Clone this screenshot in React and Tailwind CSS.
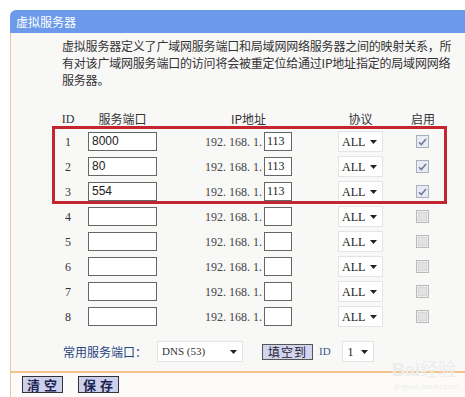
import React from "react";

// rows of the virtual server table
const rows = [
  { id: 1, port: "8000", ip: "113", on: true },
  { id: 2, port: "80", ip: "113", on: true },
  { id: 3, port: "554", ip: "113", on: true },
  { id: 4, port: "", ip: "", on: false },
  { id: 5, port: "", ip: "", on: false },
  { id: 6, port: "", ip: "", on: false },
  { id: 7, port: "", ip: "", on: false },
  { id: 8, port: "", ip: "", on: false },
];

const cjk = "font-['Noto_Sans_CJK_SC',sans-serif]";
const serif = "font-['Liberation_Serif','Noto_Sans_CJK_SC',serif]";

const Arrow = () => (
  <svg width="7" height="4" viewBox="0 0 7 4" className="shrink-0">
    <path d="M0 0h7L3.5 4z" fill="#222" />
  </svg>
);

const Check = ({ on }) => (
  <div
    className={`w-[13px] h-[13px] border flex items-center justify-center ${
      on ? "border-[#a9adbd] bg-[#e9ebf2]" : "border-[#b9b9b9] bg-[#eeeeee]"
    }`}
  >
    {on ? (
      <svg width="9" height="8" viewBox="0 0 9 8">
        <path d="M1 4.2l2.3 2.4L8 1" fill="none" stroke="#6f7c9e" strokeWidth="1.6" />
      </svg>
    ) : (
      <div className="w-[9px] h-[9px] bg-[#e2e2e2] border border-[#d6d6d6]" />
    )}
  </div>
);

const Row = ({ r }) => (
  <div className="flex items-center h-[25px]">
    <div className="w-[47px]" />
    <div className={`w-[20px] text-center text-[12px] text-[#333] ${serif}`}>{r.id}</div>
    <div className="ml-[10px] w-[69px] h-[19px] border border-[#666] bg-white pl-[3px] text-[12px] leading-[17px] text-[#222] font-['Liberation_Sans',sans-serif]">
      {r.port}
    </div>
    <div className={`ml-[48px] w-[57px] text-[12px] text-[#444] whitespace-nowrap ${serif}`}>192. 168. 1.</div>
    <div className={`ml-[2px] w-[28px] h-[19px] border border-[#666] bg-white pl-[2px] text-[12px] leading-[17px] text-[#222] ${serif}`}>
      {r.ip}
    </div>
    <div className="ml-[46px] w-[45px] h-[21px] border border-[#e4e4e4] bg-white flex items-center justify-between pl-[3px] pr-[5px]">
      <span className={`text-[12px] text-[#222] ${serif}`}>ALL</span>
      <Arrow />
    </div>
    <div className="ml-[33px]">
      <Check on={r.on} />
    </div>
  </div>
);

const App = () => {
  return (
    <div className="relative w-[465px] h-[397px] bg-white overflow-hidden pt-[10px] pl-[10px]">
      <div className={`h-[23px] bg-[#6b9aea] rounded-tl-[6px] pl-[6px] text-white text-[12px] leading-[23px] ${cjk}`}>
        虚拟服务器
      </div>
      <div className="border-l border-[#e8c9a2] h-[364px] bg-[#fdfbf9]">
        <div className="h-[340px] bg-[#f8f8f7] border-b-2 border-[#f2c48c] relative">
          {/* description */}
          <div className={`pl-[51px] pt-[4px] text-[12px] leading-[17px] text-[#333] whitespace-nowrap tracking-[-0.2px] ${cjk}`}>
            <div>虚拟服务器定义了广域网服务端口和局域网网络服务器之间的映射关系，所</div>
            <div>有对该广域网服务端口的访问将会被重定位给通过IP地址指定的局域网网络</div>
            <div>服务器。</div>
          </div>

          {/* table header */}
          <div className={`mt-[21px] flex items-center h-[20px] text-[12px] text-[#333] ${cjk}`}>
            <div className="w-[47px]" />
            <div className={`w-[20px] text-center ${serif}`}>ID</div>
            <div className="ml-[10px] w-[69px] text-center">服务端口</div>
            <div className="ml-[48px] w-[87px] text-center">IP地址</div>
            <div className="ml-[46px] w-[45px] text-center">协议</div>
            <div className="ml-[22px] w-[36px] text-center">启用</div>
          </div>

          {rows.map(r => (
            <Row key={r.id} r={r} />
          ))}

          {/* common ports */}
          <div className="flex items-center mt-[12px] h-[21px]">
            <div className={`ml-[52px] w-[94px] text-[12px] text-[#27457e] ${cjk}`}>常用服务端口：</div>
            <div className="w-[86px] h-[21px] bg-white border border-[#e4e4e4] flex items-center justify-between pl-[4px] pr-[5px]">
              <span className={`text-[11px] text-[#333] ${serif}`}>DNS (53)</span>
              <Arrow />
            </div>
            <div className={`ml-[19px] w-[51px] h-[16px] bg-[#d3d5ef] border border-[#555] text-[12px] leading-[13px] text-[#223] text-center overflow-hidden tracking-[1px] ${cjk}`}>
              填空到
            </div>
            <div className={`ml-[6px] text-[11px] text-[#3a5a8a] ${serif}`}>ID</div>
            <div className="ml-[11px] w-[32px] h-[21px] bg-white border border-[#e4e4e4] flex items-center justify-between pl-[5px] pr-[5px]">
              <span className={`text-[12px] text-[#222] ${serif}`}>1</span>
              <Arrow />
            </div>
          </div>

          {/* highlight box */}
          <div className="absolute left-[41px] top-[93px] w-[395px] h-[78px] border-[3px] border-[#c3262e]" />
        </div>

        {/* bottom buttons */}
        <div className={`flex items-center gap-[15px] pl-[11px] pt-[3px] ${cjk}`}>
          <div className="w-[41px] h-[17px] bg-[#cdd0ec] border border-[#333] text-[13px] leading-[15px] text-[#1c2550] text-center font-bold tracking-[4px] pl-[3px]">
            清空
          </div>
          <div className="w-[41px] h-[17px] bg-[#cdd0ec] border border-[#333] text-[13px] leading-[15px] text-[#1c2550] text-center font-bold tracking-[4px] pl-[3px]">
            保存
          </div>
        </div>
      </div>

      {/* watermark */}
      <div className="absolute left-[392px] top-[358px] leading-[20px] text-[18px] font-bold text-[#ececec] font-['Liberation_Sans',sans-serif]">
        Bai<span className={`${cjk} font-normal`}>经验</span>
      </div>
      <div className="absolute left-[394px] top-[382px] leading-[10px] text-[8px] text-[#eeeeee] font-['Liberation_Sans',sans-serif]">
        jingyan.baidu.com
      </div>
    </div>
  );
};

export default App;
